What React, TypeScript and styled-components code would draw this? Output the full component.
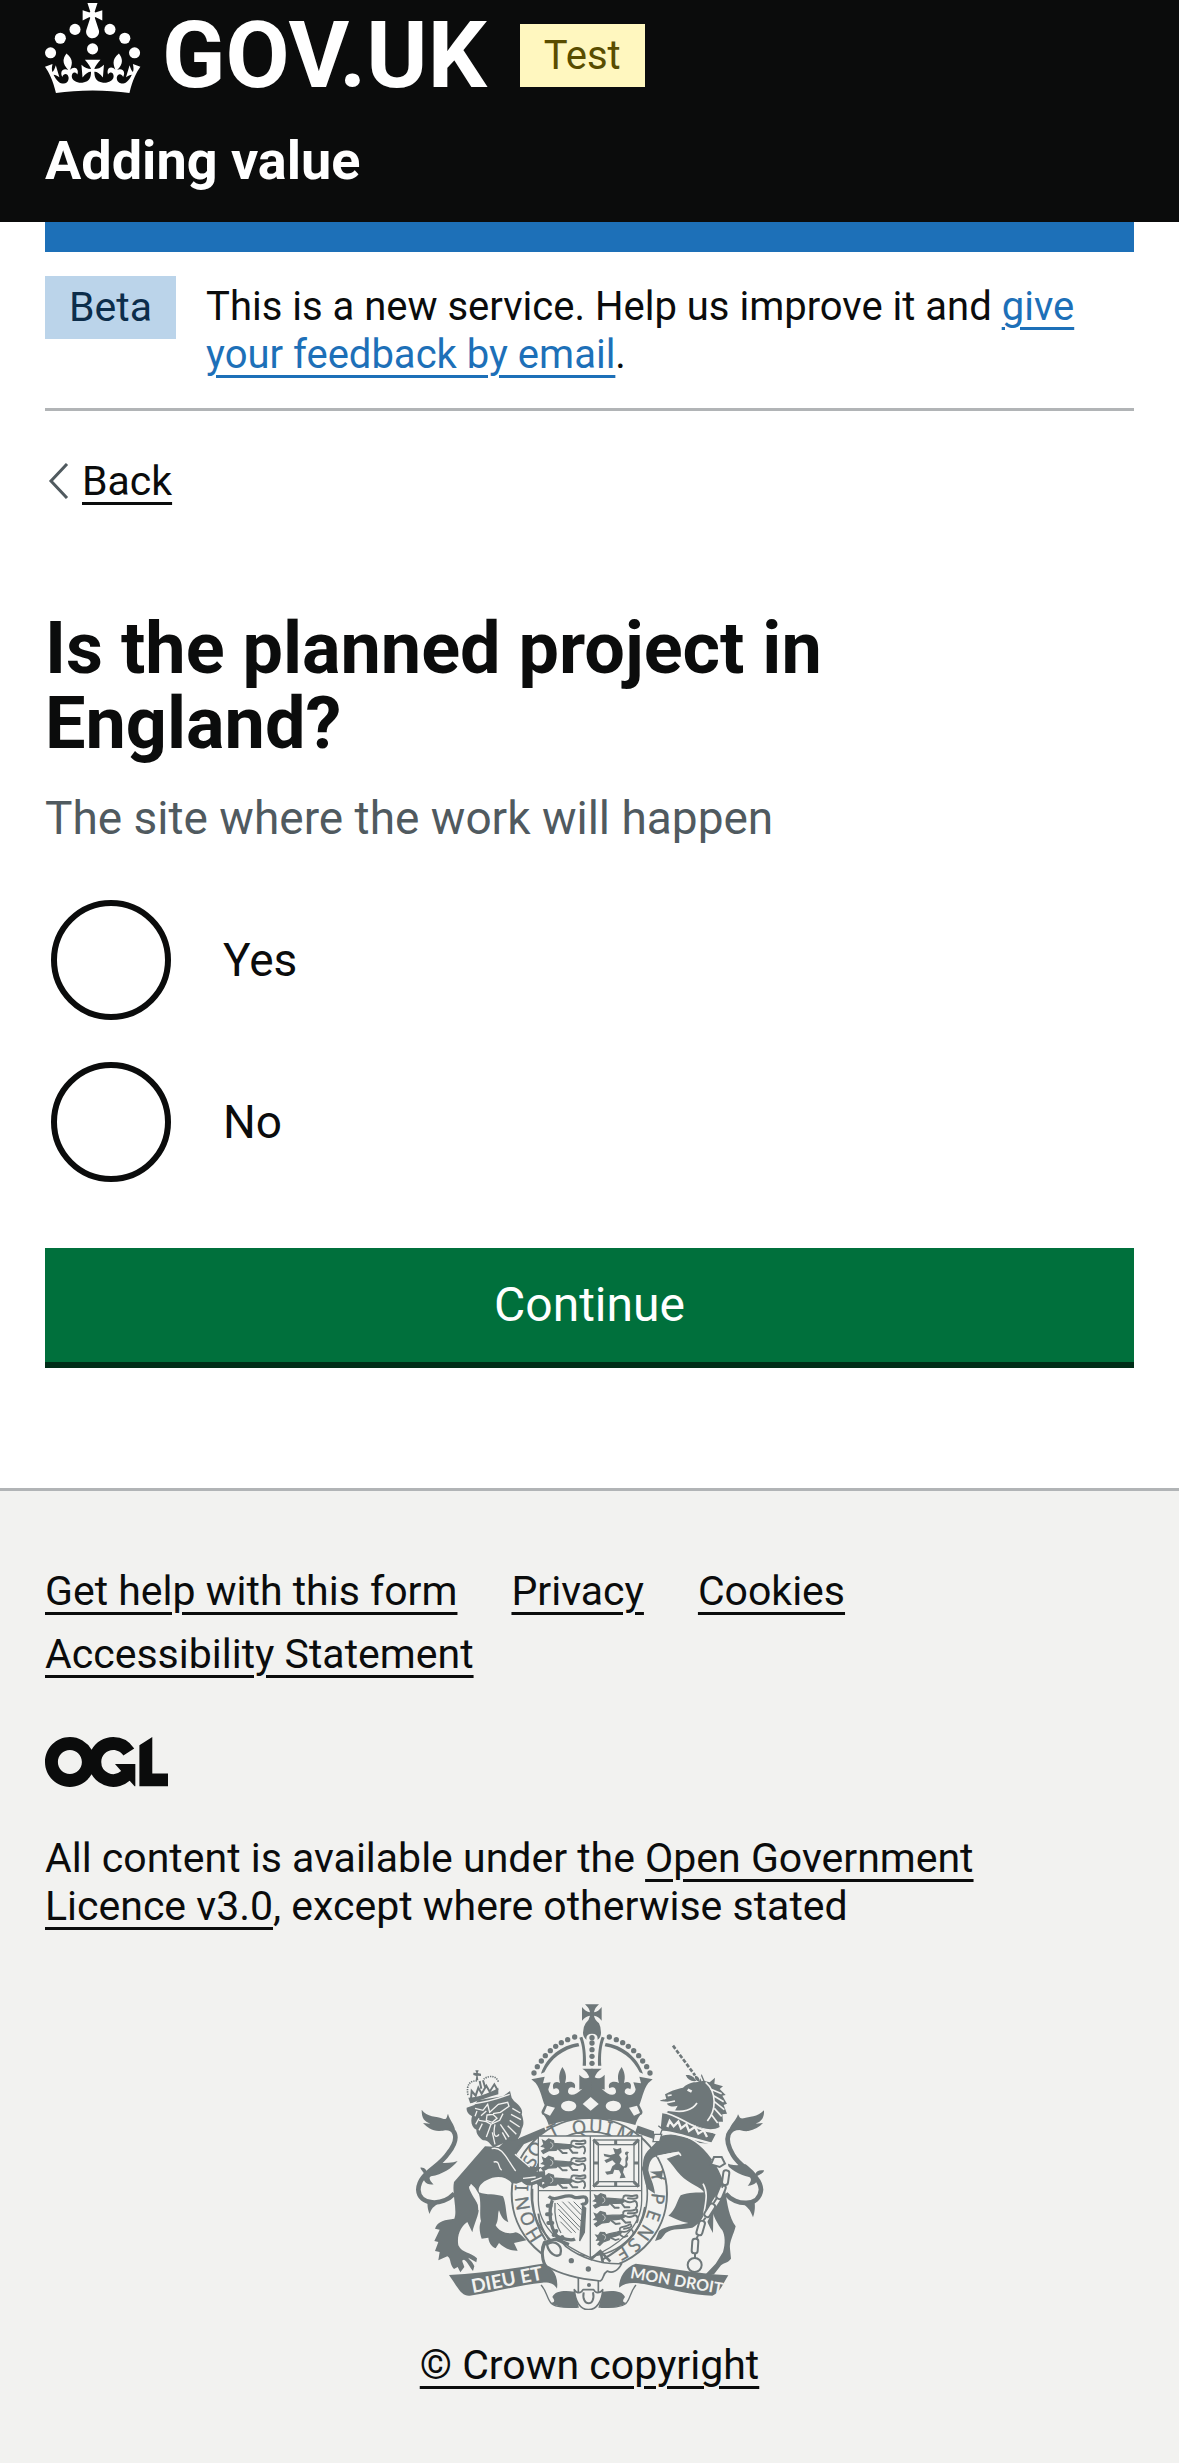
import React, { useState } from "react";
import styled, { createGlobalStyle } from "styled-components";

const ink = "#0b0c0c";
const paper = "#f2f2f0";
const crest = "#6e7779";

const GlobalStyle = createGlobalStyle`
  *, *::before, *::after { box-sizing: border-box; }
  body {
    margin: 0;
    background: ${paper};
    color: ${ink};
    font-family: Roboto, "Liberation Sans", Arial, sans-serif;
    font-size: 41px;
    line-height: 48px;
  }
`;

const Header = styled.header`
  background: ${ink};
  color: #ffffff;
  padding: 3px 45px 30px;
`;

const Brand = styled.div`
  display: flex;
  align-items: center;
  height: 105px;
  margin-bottom: 21px;
`;

const LogoLink = styled.a`
  display: flex;
  align-items: flex-start;
  gap: 21px;
  height: 105px;
  color: inherit;
  text-decoration: none;
`;

const Crown = styled.svg`
  display: block;
  width: 96px;
  height: 90px;
  fill: currentColor;
`;

const Wordmark = styled.span`
  font-size: 93px;
  font-weight: 700;
  line-height: 105px;
`;

const Tag = styled.strong<{ $tone: "yellow" | "blue" }>`
  flex: none;
  padding: 0 24px;
  font-weight: 400;
  line-height: 63px;
  color: ${(p) => (p.$tone === "yellow" ? "#594d00" : "#0c2d4a")};
  background: ${(p) => (p.$tone === "yellow" ? "#fff7bf" : "#bbd4ea")};
`;

const StageTag = styled(Tag)`
  margin: 0 0 0 33px;
  font-size: 40px;
`;

const ServiceName = styled.a`
  display: block;
  font-size: 54px;
  font-weight: 700;
  line-height: 63px;
  color: #ffffff;
  text-decoration: none;
`;

const Page = styled.div`
  padding: 0 45px 126px;
  background: #ffffff;
`;

const PhaseBanner = styled.div`
  display: flex;
  align-items: flex-start;
  gap: 30px;
  padding: 24px 0 29px;
  border-top: 30px solid #1d70b8;
  border-bottom: 3px solid #b1b4b6;
`;

const BannerText = styled.p`
  margin: 0;
  padding-top: 7px;
  font-size: 40px;
`;

const Link = styled.a<{ $blue?: boolean }>`
  color: ${(p) => (p.$blue ? "#1d70b8" : ink)};
  text-decoration: underline;
  text-decoration-thickness: 3px;
  text-underline-offset: 7px;
`;

const BackRow = styled.nav`
  display: flex;
  align-items: center;
  gap: 13px;
  padding: 46px 0 0 3px;
`;

const Chevron = styled.svg`
  display: block;
  width: 21px;
  height: 36px;
  fill: none;
  stroke: #505a5f;
  stroke-width: 3;
`;

const Question = styled.fieldset`
  min-width: 0;
  margin: 106px 0 66px;
  padding: 0;
  border: 0;
`;

const Legend = styled.legend`
  padding: 0 45px 0 0;
`;

const Title = styled.h1`
  margin: 0;
  font-size: 72px;
  font-weight: 700;
  line-height: 75px;
`;

const Hint = styled.p`
  margin: 27px 0 52px;
  font-size: 46px;
  line-height: 60px;
  color: #505a5f;
`;

const Choices = styled.div`
  display: flex;
  flex-direction: column;
  gap: 42px;
  padding-left: 6px;
`;

const Choice = styled.label`
  display: flex;
  align-items: center;
  gap: 52px;
  font-size: 46px;
  line-height: 60px;
`;

const Radio = styled.input`
  appearance: none;
  width: 120px;
  height: 120px;
  margin: 0;
  border: 6px solid ${ink};
  border-radius: 50%;
  background: #ffffff;
  &:checked {
    background: radial-gradient(circle, ${ink} 30px, #ffffff 31px);
  }
`;

const Submit = styled.button`
  display: block;
  width: 100%;
  margin: 0;
  padding: 27px 30px;
  border: 0;
  border-radius: 0;
  background: #00703c;
  box-shadow: 0 6px 0 #002d18;
  color: #ffffff;
  font-family: inherit;
  font-size: 48px;
  line-height: 60px;
`;

const Footer = styled.footer`
  padding: 76px 45px 74px;
  border-top: 3px solid #b1b4b6;
  background: ${paper};
`;

const FooterLinks = styled.ul`
  display: flex;
  flex-wrap: wrap;
  gap: 15px 54px;
  margin: 0 0 59px;
  padding: 0;
  list-style: none;
`;

const OglMark = styled.svg`
  display: block;
  width: 123px;
  height: 50px;
  margin-bottom: 47px;
  fill: ${ink};
`;

const Licence = styled.p`
  margin: 0 45px 74px 0;
`;

const Copyright = styled.div`
  display: flex;
  flex-direction: column;
  align-items: center;
  gap: 31px;
`;

const Arms = styled.svg`
  display: block;
  width: 348px;
  height: 306px;
`;

const CrownMark = () => (
  <Crown viewBox="0 0 64 60" aria-hidden="true">
    <circle cx="20" cy="17.6" r="3.7" />
    <circle cx="10.2" cy="23.5" r="3.7" />
    <circle cx="3.7" cy="33.2" r="3.7" />
    <circle cx="31.7" cy="30.6" r="3.7" />
    <circle cx="43.3" cy="17.6" r="3.7" />
    <circle cx="53.2" cy="23.5" r="3.7" />
    <circle cx="59.7" cy="33.2" r="3.7" />
    <path d="M33.1,9.8c.2-.1.3-.3.5-.5l4.6,2.4v-6.8l-4.6,1.5c-.1-.2-.3-.3-.5-.5l1.9-5.9h-6.7l1.9,5.9c-.2.1-.3.3-.5.5l-4.6-1.5v6.8l4.6-2.4c.1.2.3.3.5.5l-2.6,8c-.9,2.8,1.2,5.7,4.1,5.7h0c3,0,5.1-2.9,4.1-5.7l-2.6-8ZM37,37.9s-3.4,3.8-4.1,6.1c2.2,0,4.2-.5,6.4-2.8l-.7,8.5c-2-2.8-4.4-4.1-5.7-3.8.1,3.1.5,6.7,5.8,7.2,3.7.3,6.7-1.5,7-3.8.4-2.6-2-4.3-3.7-1.6-1.4-4.5,2.4-6.1,4.9-3.2-1.9-4.5-1.8-7.7,2.4-10.9,3,4,2.6,7.3-1.2,11.1,2.4-1.3,6.2,0,4,4.6-1.2-2.8-3.7-2.2-4.2.2-.3,1.7.7,3.7,3,4.2,1.9.3,4.7-.9,7-5.9-1.3,0-2.4.7-3.9,1.7l2.4-8c.6,2.3,1.4,3.7,2.2,4.5.6-1.6.5-2.8,0-5.3l5,1.8c-2.6,3.6-5.2,8.7-7.3,17.5-7.4-1.1-15.7-1.7-24.5-1.7h0c-8.8,0-17.1.6-24.5,1.7-2.1-8.9-4.7-13.9-7.3-17.5l5-1.8c-.5,2.5-.6,3.7,0,5.3.8-.8,1.6-2.3,2.2-4.5l2.4,8c-1.5-1-2.6-1.7-3.9-1.7,2.3,5,5.2,6.2,7,5.9,2.3-.4,3.3-2.4,3-4.2-.5-2.4-3-3.1-4.2-.2-2.2-4.6,1.6-6,4-4.6-3.7-3.7-4.2-7.1-1.2-11.1,4.2,3.2,4.3,6.4,2.4,10.9,2.5-2.8,6.3-1.3,4.9,3.2-1.8-2.7-4.1-1-3.7,1.6.3,2.3,3.3,4.1,7,3.8,5.4-.5,5.7-4.2,5.8-7.2-1.3-.2-3.7,1-5.7,3.8l-.7-8.5c2.2,2.3,4.2,2.7,6.4,2.8-.7-2.3-4.1-6.1-4.1-6.1h10.6,0Z" />
  </Crown>
);

const beads = [
  [527, 170], [506, 178], [487, 187], [470, 198], [454, 211],
  [439, 226], [427, 242], [415, 259], [405, 278],
];

// Left half of the royal crown; the right half is its mirror.
const HalfCrown = () => (
  <g fill={crest}>
    {beads.map(([x, y]) => (
      <circle key={x} cx={x} cy={y} r="8" />
    ))}
    <path d="M541 198C492 206 455 236 436 276L426 280C442 230 488 194 538 188Z" />
    <path d="M541 172L550 169C558 190 562 220 561 256H551C553 225 551 195 541 172Z" />
    <path d="M397 297L437 289L432 309L455 306L448 327C450 346 474 350 481 336C481 324 471 320 464 327C457 311 468 300 483 308C478 290 481 275 490 260C501 275 504 290 498 308C516 299 534 308 527 324C516 317 506 322 507 336C513 350 533 343 550 325L541 328V283C550 294 563 297 571 291C568 281 560 271 550 265H581V415C530 415 485 422 449 434C446 424 441 412 434 404C430 404 426 398 428 392L437 374C430 360 426 330 410 308Z" />
  </g>
);

const garter: [string, number, number, number][] = [
  ["H", 405, 763, -122], ["O", 386, 715, -111], ["N", 371, 669, -99], ["I", 368, 623, -88],
  ["S", 393, 544, -64], ["O", 410, 507, -54], ["T", 464, 452, -26],
  ["Q", 540, 441, -9], ["U", 590, 438, 3], ["I", 630, 444, 12], ["M", 678, 462, 25],
  ["Y", 776, 588, 76], ["P", 776, 655, 97], ["E", 763, 706, 109], ["N", 739, 757, 124],
  ["S", 706, 794, 138], ["E", 670, 817, 150],
];

const Passant = ({ at }: { at: string }) => (
  <g transform={at} fill={crest} stroke={crest} strokeWidth="4" strokeLinecap="round">
    <path d="M4 4L12 8L22 0L36 5L38 14C56 12 74 19 88 16L92 24C80 32 66 30 50 28L44 34L22 35L6 43L1 36L12 30L10 24L1 22L8 16Z" />
    <path d="M88 18C102 22 102 30 118 24C132 16 134 36 128 43M84 28L94 41H108M52 30L64 42H76M90 12C90 0 108 8 118 7S134 0 132 12C128 18 114 14 104 14" fill="none" strokeWidth="6" />
    <path d="M28 10C38 14 36 26 28 28" stroke={paper} strokeWidth="2" fill="none" />
  </g>
);

const chain: [number, number, number][] = [
  [980, 592, 8], [966, 635, 22], [932, 690, 32], [905, 743, 16], [888, 797, 4],
];

const RoyalArms = () => (
  <Arms viewBox="51 71 1044 918" role="img" aria-label="Royal coat of arms">
    {/* crown */}
    <path fill={crest} d="M558 72H600Q587 83 585 96Q598 94 608 80V121Q598 107 585 106Q587 118 600 129Q606 140 606 157Q606 172 595 179H563Q552 170 552 157Q552 140 560 129Q571 118 573 106Q560 107 549 121V80Q560 94 573 96Q571 83 558 72Z" />
    <path fill={paper} d="M560 258L562 175Q562 160 579 160T596 175L598 258Z" />
    {[172, 188, 208, 228, 249].map((y) => (
      <circle key={y} cx="579" cy={y} r="8" fill={crest} />
    ))}
    <HalfCrown />
    <g transform="translate(1158 0) scale(-1 1)">
      <HalfCrown />
    </g>
    <g fill={paper}>
      <path d="M551 371L575 350L599 371L575 391Z" />
      <ellipse cx="509" cy="377" rx="23" ry="16" />
      <ellipse cx="643" cy="377" rx="23" ry="16" />
      <path d="M444 376L468 382L453 406L435 398ZM714 376L690 382L705 406L723 398Z" />
    </g>

    {/* garter and shield */}
    <path d="M340 520L368 482L440 452M712 446L780 470" fill="none" stroke={crest} strokeWidth="22" />
    <ellipse cx="571" cy="640" rx="233" ry="227" fill={paper} stroke={crest} strokeWidth="6" />
    <ellipse cx="571" cy="640" rx="174" ry="186" fill={paper} stroke={crest} strokeWidth="5" />
    <g fill={crest} stroke={crest} strokeWidth="1" fontFamily='"Noto Sans", sans-serif' fontSize="55" textAnchor="middle">
      {garter.map(([c, x, y, r]) => (
        <text key={`${x}-${y}`} transform={`translate(${x} ${y}) rotate(${r})`} dy="19">
          {c}
        </text>
      ))}
    </g>
    <path d="M418 467H728V660C728 745 650 800 574 832C490 795 418 745 418 660Z" fill={paper} stroke={crest} strokeWidth="4" />
    <path d="M574 467V832M418 631H728" stroke={crest} strokeWidth="4" />
    <Passant at="translate(427 476)" />
    <Passant at="translate(427 528)" />
    <Passant at="translate(427 580)" />
    <Passant at="translate(583 640)" />
    <Passant at="translate(582 696) rotate(-6)" />
    <Passant at="translate(586 762) rotate(-18) scale(.86)" />
    <g fill="none" stroke={crest}>
      <rect x="584" y="479" width="135" height="139" strokeWidth="4" />
      <rect x="598" y="493" width="107" height="111" strokeWidth="4" />
      <path d="M583 478L598 493M719 478L704 493M583 619L598 604M719 619L704 604M650 479V493M650 604V618M584 548H598M705 548H719" strokeWidth="9" />
    </g>
    <path fill={crest} d="M642 503L654 507L666 502L668 516L660 524L668 536L662 550L676 560L672 576L680 592L662 594L666 582L660 570L646 568L642 580L624 583L618 574L634 572L640 558L650 550L640 540L622 548L616 540L634 532L616 528L614 520L634 524L648 520ZM672 560C688 556 672 536 684 526C672 522 680 508 690 516C680 524 694 530 684 544C690 556 682 568 672 560Z" />
    <g fill="none" stroke={crest}>
      <path d="M449 648C470 668 500 636 524 650C540 658 556 642 562 654C568 670 552 676 548 668M460 660C448 690 452 740 474 768C490 776 518 782 528 776" strokeWidth="10" />
      <path d="M455 676H446M455 702H444M460 728H448M472 752L464 764M490 770L484 784" strokeWidth="12" strokeLinecap="round" />
      <path d="M551 676L542 782L556 756L560 684Z" fill={crest} strokeWidth="4" />
      <path d="M474 668L544 742M478 686L540 750M480 704L530 757M484 724L518 758M490 664L546 722M508 664L546 703M524 664L548 688" strokeWidth="3" />
      <path d="M468 668C466 700 468 730 486 758" strokeWidth="4" />
      <path d="M418 700C422 740 440 765 452 782M738 680C725 765 660 810 610 838M400 625V660C404 710 420 750 440 780" strokeWidth="6" />
    </g>

    {/* lion */}
    <path d="M166 640C130 678 60 676 58 628C60 578 116 566 148 518C186 470 168 436 128 444" fill="none" stroke={crest} strokeWidth="14" />
    <g fill={crest}>
      <path d="M68 388C84 412 112 406 134 416C144 418 143 410 147 400C152 420 166 432 168 448C150 440 136 452 120 452C98 452 84 440 72 428L94 430C76 422 68 416 68 388Z" />
      <path d="M176 542C158 565 130 582 96 588C86 592 96 606 104 612C82 616 68 600 76 584C76 576 68 572 64 562C76 560 84 570 84 578C96 566 108 560 120 548C140 548 160 548 176 542Z" />
      <path d="M86 660C84 680 88 692 92 701C96 686 104 678 120 668Z" />
      <path d="M258 498L165 605C158 640 176 690 166 715C140 718 115 722 108 745L122 748L106 782L118 785L108 812L122 815L118 840L145 828C158 835 150 850 165 866L176 860L184 876L196 860C192 845 185 840 195 838C205 842 210 858 222 872L226 858C220 842 210 838 208 832L232 846L234 834C215 815 190 820 178 795C172 760 190 735 205 725L220 756C225 730 240 705 240 680C232 660 215 640 210 622L216 610L228 622L240 642C248 670 240 700 246 722C238 740 243 760 248 775L268 772C270 790 280 800 290 804L300 788C312 800 330 812 356 811L345 788L382 780C370 768 365 760 350 756C330 764 300 755 290 735C300 720 295 700 300 690C305 705 312 720 328 726C320 700 322 670 312 648C290 640 262 645 240 636C235 618 250 602 280 592C310 585 328 596 338 608L352 610L368 604C385 622 400 615 412 610L428 622L430 604L440 606L438 572L412 574L428 560L406 560C374 554 366 536 345 514L375 478L330 470L300 500Z" />
      <path d="M203 382L226 374L236 360L312 348L333 332L338 352L345 362C368 380 372 392 368 402C376 425 374 435 368 446C366 460 362 468 356 476C346 482 336 484 330 478C318 490 296 492 285 503C272 492 268 478 252 480C240 470 232 462 232 448C218 442 214 424 219 408C205 400 202 390 203 382Z" />
      <path d="M208 352C230 352 270 340 298 322V342C270 350 240 360 214 370Z" />
      <path d="M229 270H239L236 278L246 280V287L236 286L238 300H230L232 287L223 284V277L232 278Z" />
    </g>
    <path d="M207 344C200 308 218 300 236 302M298 304C292 286 272 284 254 296" fill="none" stroke={crest} strokeWidth="5" strokeDasharray="4 3" />
    <path d="M216 356L218 332L230 346L238 322L248 340L262 316L272 334L286 312L296 330M242 302L247 325M252 300L258 320" fill="none" stroke={crest} strokeWidth="6" />
    <g fill="none" stroke={paper} strokeWidth="4">
      <path d="M207 372C250 368 300 354 332 342" />
      <path d="M228 384L252 390L266 372L272 396L298 372L326 366L330 378L304 396L282 400M246 406L262 392M264 404L282 402L294 414L280 426L262 420ZM240 420L262 424L276 432L302 420L312 400M276 432L262 470M288 432C280 470 292 474 300 462M304 432L330 470M340 384L364 398M336 402L366 418M332 420L362 440M326 436L352 462M234 392L228 408M240 414L230 432M250 430L240 450" />
      <path d="M278 505C310 495 325 540 350 572M284 545C305 540 295 560 308 570M212 618C222 640 240 650 240 690M348 522L392 560M372 594L410 590M396 604L428 592" />
      <path d="M280 456L288 492M310 456L322 478" />
    </g>

    {/* unicorn */}
    <path d="M980 640C1010 678 1082 680 1086 628C1082 580 1026 566 1002 524C972 474 986 438 1030 442" fill="none" stroke={crest} strokeWidth="14" />
    <g fill={crest}>
      <path d="M1095 390C1075 412 1050 408 1034 414C1020 416 1022 408 1017 402C1012 420 996 430 990 450C1010 440 1030 455 1048 452C1066 448 1082 440 1092 428L1070 430C1088 422 1096 412 1095 390Z" />
      <path d="M976 546C994 568 1020 584 1050 590C1060 594 1056 606 1046 616C1068 616 1078 604 1074 588C1082 582 1094 580 1095 570C1080 568 1072 572 1070 580C1060 568 1050 560 1040 552C1016 556 996 556 976 546Z" />
      <path d="M1066 660C1070 684 1066 700 1062 711C1056 694 1050 684 1034 672Z" />
      <path d="M783 362C788 356 800 358 802 356L798 342C810 334 832 326 852 322C870 304 888 306 900 304L908 281L917 302L932 306L948 292L946 310L972 318L962 326L980 344L970 346L984 370L974 374L984 400L970 402L972 424L958 424L962 440C940 452 910 446 880 432L800 420L806 392L826 394L836 376C820 382 800 376 804 364Z" />
      <path d="M790 398L826 396C860 430 900 440 950 462L935 490L902 488C860 460 820 460 784 454Z" />
      <path d="M785 468C815 455 870 462 912 505C950 545 975 590 980 640C985 670 990 710 1010 738C1005 760 990 785 993 805L996 835C985 850 975 845 966 855L945 882H920L950 850L972 815C980 790 978 765 970 750C955 730 945 710 943 700L942 758C930 740 925 720 915 705C905 725 890 738 880 742C850 748 820 742 800 758L786 776L768 782L780 752C800 735 840 735 868 728C840 722 825 712 808 706C830 690 832 665 845 645C870 635 895 638 915 636C905 620 870 610 845 585C830 570 818 548 803 535L845 520C838 512 800 520 775 528C758 530 750 545 748 570C752 590 765 610 768 640L745 625C735 600 728 570 733 540C737 510 765 500 785 468Z" />
      <path d="M752 574L792 572L788 598L772 584Z" />
      <path d="M860 284C876 282 886 290 892 302C876 304 866 298 860 284ZM888 286C896 286 904 294 900 304C890 300 886 294 888 286Z" />
    </g>
    <path d="M822 196L888 285" stroke={crest} strokeWidth="8" strokeDasharray="12 5" />
    <g fill="none" stroke={paper} strokeWidth="5">
      <path d="M786 454C830 455 890 480 940 490" strokeWidth="7" />
      <path d="M790 396C840 402 880 450 952 458" strokeWidth="5" />
      <path d="M805 440L812 422L824 438L838 424L846 444L862 432L870 452L888 440L898 460L914 450L924 470" strokeWidth="7" />
      <path d="M920 306C954 335 952 390 925 422M934 326L968 340M944 346L974 364M946 364L976 388M946 384L968 408M938 404L956 428M826 392C850 396 880 390 894 368M806 346L818 344M904 288L910 302M790 370L828 362" />
      <path d="M866 328L878 334" strokeWidth="8" />
      <path d="M775 528L838 516L846 526M912 610C930 640 918 670 914 706" />
    </g>
    <g fill="none" stroke={paper} strokeWidth="18">
      <path d="M774 440V484M940 535L978 550L984 600L965 640L930 695L904 745L886 800" />
    </g>
    <g fill={paper} stroke={crest} strokeWidth="6">
      <path d="M945 530H968L978 550L962 560L936 552Z" />
      {chain.map(([x, y, r]) => (
        <rect key={y} x={x - 9} y={y - 22} width="18" height="44" rx="8" transform={`rotate(${r} ${x} ${y})`} />
      ))}
      <path d="M974 614L968 622M954 652L944 668M920 712L912 722M897 766L892 776M888 820V836" />
      <circle cx="887" cy="854" r="21" />
      <path d="M766 462H788L782 484H762ZM778 436L790 446L784 462" strokeWidth="4" />
    </g>

    {/* motto ribbon */}
    <path fill={crest} d="M150 884C250 880 345 864 430 850C455 858 480 880 474 925C466 910 450 905 430 907C350 916 285 936 212 946C186 948 176 920 150 884Z" />
    <path fill={crest} d="M988 885C890 880 790 858 710 850C680 860 660 890 660 922C680 905 704 906 735 911C805 924 870 944 940 946C964 936 972 910 988 885Z" />
    <g fill={paper} fontFamily='Lato, "Noto Sans", sans-serif' fontWeight="700">
      <text transform="translate(221 938) rotate(-11)" fontSize="57">DIEU ET</text>
      <text transform="translate(692 893) rotate(10)" fontSize="48">MON DROIT</text>
    </g>
    <path d="M426 914C444 932 444 958 458 970C474 982 500 981 535 981M711 914C694 932 694 958 680 970C664 982 640 981 605 981" fill="none" stroke={crest} strokeWidth="4" />
    <path fill={crest} d="M460 950C468 930 500 930 526 934L540 982C510 984 475 980 455 968C462 966 472 966 460 950ZM678 950C670 930 638 930 612 934L598 982C628 984 663 980 683 968C676 966 666 966 678 950Z" />

    {/* belt and buckle */}
    <g fill={paper} stroke={crest} strokeWidth="5" strokeLinejoin="round">
      <path d="M538 880V940H598V885Z" />
      <path d="M526 928C534 940 546 940 552 928H584C590 940 602 940 611 928C610 960 594 988 568 988S528 960 526 928Z" />
      <path d="M554 936C546 980 592 980 582 936" strokeWidth="6" />
      <path d="M436 798C442 774 482 772 500 798C545 832 600 852 668 850C656 874 638 880 625 872C610 880 616 896 604 902C540 896 480 880 444 858C426 842 430 816 436 798Z" />
      <path d="M444 792C470 776 492 798 484 822C470 834 448 816 444 792Z" strokeWidth="7" />
      <path d="M438 858C428 830 426 806 436 786L470 776L510 792" fill="none" strokeWidth="9" />
    </g>
    <g fill={crest}>
      <circle cx="517" cy="841" r="8" />
      <circle cx="568" cy="866" r="8" />
      <circle cx="570" cy="914" r="6" />
    </g>
    <path d="M574 838L604 812L634 844M604 812L612 848" fill="none" stroke={crest} strokeWidth="8" />
  </Arms>
);

const options = ["Yes", "No"];
const footerLinks = ["Get help with this form", "Privacy", "Cookies", "Accessibility Statement"];

export default function App() {
  const [answer, setAnswer] = useState("");

  return (
    <>
      <GlobalStyle />
      <Header>
        <Brand>
          <LogoLink href="#">
            <CrownMark />
            <Wordmark>GOV.UK</Wordmark>
          </LogoLink>
          <StageTag $tone="yellow">Test</StageTag>
        </Brand>
        <ServiceName href="#">Adding value</ServiceName>
      </Header>

      <Page>
        <PhaseBanner>
          <Tag $tone="blue">Beta</Tag>
          <BannerText>
            This is a new service. Help us improve it and{" "}
            <Link $blue href="#">give your feedback by email</Link>.
          </BannerText>
        </PhaseBanner>

        <BackRow aria-label="Back">
          <Chevron viewBox="0 0 21 36" aria-hidden="true">
            <path d="M19 1L3 18L19 35" />
          </Chevron>
          <Link href="#">Back</Link>
        </BackRow>

        <main>
          <form onSubmit={(e) => e.preventDefault()}>
            <Question aria-describedby="location-hint">
              <Legend>
                <Title>Is the planned project in England?</Title>
              </Legend>
              <Hint id="location-hint">The site where the work will happen</Hint>
              <Choices>
                {options.map((option) => (
                  <Choice key={option} htmlFor={`in-england-${option}`}>
                    <Radio
                      type="radio"
                      id={`in-england-${option}`}
                      name="in-england"
                      value={option}
                      checked={answer === option}
                      onChange={() => setAnswer(option)}
                    />
                    {option}
                  </Choice>
                ))}
              </Choices>
            </Question>
            <Submit type="submit">Continue</Submit>
          </form>
        </main>
      </Page>

      <Footer>
        <FooterLinks>
          {footerLinks.map((label) => (
            <li key={label}>
              <Link href="#">{label}</Link>
            </li>
          ))}
        </FooterLinks>
        <OglMark viewBox="0 0 483.2 195.7" role="img" aria-label="Open Government Licence">
          <path d="M421.5 142.8V.1l-50.7 32.3v161.1h112.4v-50.7zm-122.3-9.6A47.12 47.12 0 0 1 221 97.8c0-26 21.1-47.1 47.1-47.1 16.7 0 31.4 8.7 39.7 21.8l42.7-27.2A97.63 97.63 0 0 0 268.1 0c-36.5 0-68.3 20.1-85.1 49.7A98 98 0 0 0 97.8 0C43.9 0 0 43.9 0 97.8s43.9 97.8 97.8 97.8c36.5 0 68.3-20.1 85.1-49.7a97.76 97.76 0 0 0 149.6 25.4l19.4 22.2h3v-87.8h-80l24.3 27.5zM97.8 145c-26 0-47.1-21.1-47.1-47.1s21.1-47.1 47.1-47.1 47.1 21.1 47.1 47.1S123.8 145 97.8 145" />
        </OglMark>
        <Licence>
          All content is available under the <Link href="#">Open Government Licence v3.0</Link>, except
          where otherwise stated
        </Licence>
        <Copyright>
          <RoyalArms />
          <Link href="#">© Crown copyright</Link>
        </Copyright>
      </Footer>
    </>
  );
}
